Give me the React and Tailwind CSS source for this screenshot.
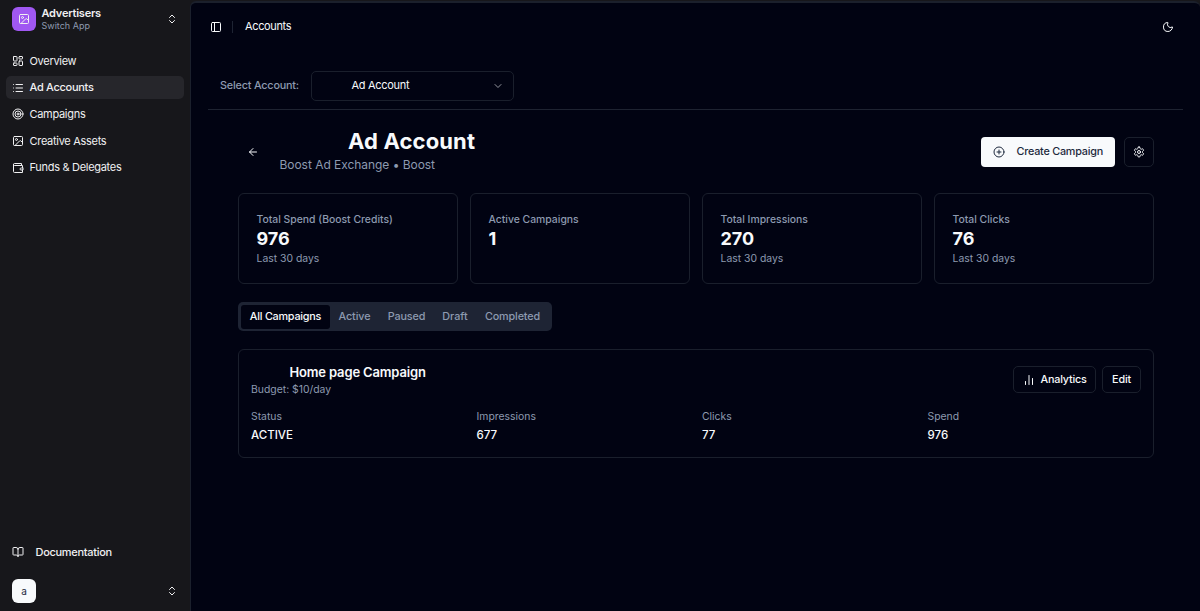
import {
  ArrowLeft,
  BookOpen,
  ChartNoAxesColumn,
  ChevronDown,
  ChevronsUpDown,
  CirclePlus,
  Image,
  LayoutDashboard,
  List,
  Moon,
  PanelLeft,
  Target,
} from 'lucide-react';

const navItems = [
  { label: 'Overview', icon: LayoutDashboard },
  { label: 'Ad Accounts', icon: List, active: true },
  { label: 'Campaigns', icon: Target },
  { label: 'Creative Assets', icon: Image },
  { label: 'Funds & Delegates', icon: WalletIcon },
];

const stats = [
  { label: 'Total Spend (Boost Credits)', value: '976', note: 'Last 30 days' },
  { label: 'Active Campaigns', value: '1' },
  { label: 'Total Impressions', value: '270', note: 'Last 30 days' },
  { label: 'Total Clicks', value: '76', note: 'Last 30 days' },
];

const tabs = [
  { label: 'All Campaigns', cl: 'w-[89px] bg-[#010312] text-slate-50 tracking-[-0.22px]' },
  { label: 'Active', cl: 'w-[49px] tracking-[-0.1px]' },
  { label: 'Paused', cl: 'w-[55px] tracking-[-0.15px]' },
  { label: 'Draft', cl: 'w-[42px]' },
  { label: 'Completed', cl: 'w-[73px] tracking-[-0.15px]' },
];

const details = [
  { label: 'Status', value: 'ACTIVE' },
  { label: 'Impressions', value: '677' },
  { label: 'Clicks', value: '77' },
  { label: 'Spend', value: '976' },
];

const borderCl = 'border border-[#1a1f2c]';
const mutedCl = 'text-[#8d9ab0]';

function WalletIcon() {
  return (
    <svg width="12" height="12" viewBox="0 0 24 24" fill="none" stroke="currentColor" strokeWidth="2" strokeLinecap="round" strokeLinejoin="round">
      <path d="M21 12V7H5a2 2 0 0 1 0-4h14v4" />
      <path d="M3 5v14a2 2 0 0 0 2 2h16v-5" />
      <path d="M18 12a2 2 0 0 0 0 4h4v-4Z" />
    </svg>
  );
}

function GearIcon() {
  return (
    <svg width="12" height="12" viewBox="0 0 24 24" fill="none" stroke="currentColor" strokeWidth="2" strokeLinecap="round" strokeLinejoin="round">
      <path d="M12.22 2h-.44a2 2 0 0 0-2 2v.18a2 2 0 0 1-1 1.73l-.43.25a2 2 0 0 1-2 0l-.15-.08a2 2 0 0 0-2.73.73l-.22.38a2 2 0 0 0 .73 2.73l.15.1a2 2 0 0 1 1 1.72v.51a2 2 0 0 1-1 1.74l-.15.09a2 2 0 0 0-.73 2.73l.22.38a2 2 0 0 0 2.73.73l.15-.08a2 2 0 0 1 2 0l.43.25a2 2 0 0 1 1 1.73V20a2 2 0 0 0 2 2h.44a2 2 0 0 0 2-2v-.18a2 2 0 0 1 1-1.73l.43-.25a2 2 0 0 1 2 0l.15.08a2 2 0 0 0 2.73-.73l.22-.39a2 2 0 0 0-.73-2.73l-.15-.08a2 2 0 0 1-1-1.74v-.5a2 2 0 0 1 1-1.74l.15-.09a2 2 0 0 0 .73-2.73l-.22-.38a2 2 0 0 0-2.73-.73l-.15.08a2 2 0 0 1-2 0l-.43-.25a2 2 0 0 1-1-1.73V4a2 2 0 0 0-2-2z" />
      <circle cx="12" cy="12" r="3" />
    </svg>
  );
}

function Sidebar() {
  return (
    <aside className="flex w-[190px] shrink-0 flex-col text-[#f0f0f2]">
      <div className="flex h-[38px] items-center pl-3 pr-3">
        <div className="flex size-6 items-center justify-center rounded-md bg-[#a058f2]">
          <Image size={12} />
        </div>
        <div className="ml-[5.5px] flex-1">
          <div className="text-[11px] font-semibold leading-[13px] tracking-[-0.22px]">Advertisers</div>
          <div className="text-[9px] leading-[11px] text-[#8d9ab0]">Switch App</div>
        </div>
        <ChevronsUpDown size={12} />
      </div>
      <nav className="mt-[11px] flex flex-col gap-[3px] px-1.5">
        {navItems.map(({ label, icon: Icon, active }) => (
          <a
            key={label}
            className={`flex h-[23.7px] items-center gap-[5.5px] rounded-[5px] px-1.5 text-[11px] tracking-[-0.3px] ${active ? 'bg-[#26262b] font-medium' : ''}`}
          >
            <Icon size={12} />
            {label}
          </a>
        ))}
      </nav>
      <div className="mt-auto flex h-6 items-center pl-3 text-[11px] font-medium tracking-[-0.3px]">
        <BookOpen size={12} />
        <span className="ml-[11.5px]">Documentation</span>
      </div>
      <div className="mb-2 mt-[15px] flex h-6 items-center justify-between pl-3 pr-3">
        <div className="flex size-6 items-center justify-center rounded-md bg-slate-50 text-[10px] text-slate-800">a</div>
        <ChevronsUpDown size={12} />
      </div>
    </aside>
  );
}

function StatCard({ label, value, note }) {
  return (
    <div className={`h-[91px] rounded-md px-[17.5px] pt-[18px] ${borderCl}`}>
      <div className={`text-[10.4px] font-medium leading-[15px] ${mutedCl}`}>{label}</div>
      <div className="text-[18px] font-bold leading-6 text-slate-50">{value}</div>
      {note && <div className={`text-[10.4px] leading-[15px] ${mutedCl}`}>{note}</div>}
    </div>
  );
}

function CampaignCard() {
  return (
    <div className={`mt-[18px] h-[109px] rounded-md px-3 pt-3 ${borderCl}`}>
      <div className="flex justify-between">
        <div>
          <div className="pl-[38.5px] text-[13px] font-semibold leading-5 tracking-[-0.15px] text-slate-50">Home page Campaign</div>
          <div className={`text-[10.4px] leading-[15px] ${mutedCl}`}>Budget: $10/day</div>
        </div>
        <div className="mt-[4px] flex gap-1.5 text-[10.8px] font-medium tracking-[-0.2px] text-slate-50">
          <button className={`flex h-[27px] w-[83px] items-center gap-1.5 rounded-[5px] pl-[8.5px] ${borderCl}`}>
            <ChartNoAxesColumn size={12} />
            <span className="pt-px">Analytics</span>
          </button>
          <button className={`h-[27px] w-[39px] rounded-[5px] pt-px ${borderCl}`}>Edit</button>
        </div>
      </div>
      <div className="mt-[12px] grid grid-cols-4 gap-3">
        {details.map((d) => (
          <div key={d.label}>
            <div className={`text-[10.4px] leading-[15px] ${mutedCl}`}>{d.label}</div>
            <div className="mt-[2px] text-[11.5px] font-medium leading-[18px] text-slate-50">{d.value}</div>
          </div>
        ))}
      </div>
    </div>
  );
}

export default function App() {
  return (
    <div className="flex h-[611px] w-[1200px] overflow-hidden bg-[#17171b] font-['Inter',sans-serif] text-[11px]">
      <Sidebar />
      <main className="mt-[1px] flex-1 rounded-t-[6px] border-l border-t-2 border-[#1b202c] bg-[#010312]">
        <header className="flex h-[47px] items-center pl-[19px] pr-[26px] text-slate-50">
          <PanelLeft size={12} />
          <div className="ml-[10px] h-3 w-px bg-[#1e2433]" />
          <span className="ml-3 tracking-[-0.36px]">Accounts</span>
          <Moon size={12} className="ml-auto" />
        </header>
        <div className="ml-[17px] mr-[17px] flex h-[60px] items-center border-b border-[#1e2331] pl-3 pt-3">
          <span className={`w-[90.5px] pt-px text-[10.8px] font-medium tracking-[-0.18px] ${mutedCl}`}>Select Account:</span>
          <button className={`flex h-[30px] w-[203.5px] items-center justify-between rounded-[5px] pl-10 pr-[9px] tracking-[-0.3px] text-slate-50 ${borderCl}`}>
            Ad Account
            <ChevronDown size={12} className="opacity-60" />
          </button>
        </div>
        <div className="ml-[47px] mr-[46px]">
          <div className="flex h-[83px] items-center">
            <ArrowLeft size={12} className="ml-[9px] text-slate-50" />
            <div className="ml-[20.5px] flex-1 pb-[2px]">
              <h1 className="pl-[68.5px] text-[22px] font-bold leading-[29px] tracking-[0.14px] text-slate-50">Ad Account</h1>
              <p className={`text-[12px] leading-[18px] tracking-[-0.04px] ${mutedCl}`}>Boost Ad Exchange • Boost</p>
            </div>
            <button className="flex h-[30px] w-[134px] items-center rounded-[4px] bg-slate-50 pl-3 text-[10.8px] font-medium tracking-[-0.22px] text-slate-800">
              <CirclePlus size={12} />
              <span className="ml-[11.5px] pt-px">Create Campaign</span>
            </button>
            <button className={`ml-[9px] flex size-[30px] items-center justify-center rounded-[5px] text-slate-50 ${borderCl}`}>
              <GearIcon />
            </button>
          </div>
          <div className="grid grid-cols-4 gap-3">
            {stats.map((s) => (
              <StatCard key={s.label} {...s} />
            ))}
          </div>
          <div className={`mt-[18px] flex h-[29px] w-[314px] items-center rounded-[5px] bg-[#1e2434] px-[3px] text-[10.8px] font-medium ${mutedCl}`}>
            {tabs.map((t) => (
              <button key={t.label} className={`h-6 rounded-[3px] pt-px ${t.cl}`}>
                {t.label}
              </button>
            ))}
          </div>
          <CampaignCard />
        </div>
      </main>
    </div>
  );
}
